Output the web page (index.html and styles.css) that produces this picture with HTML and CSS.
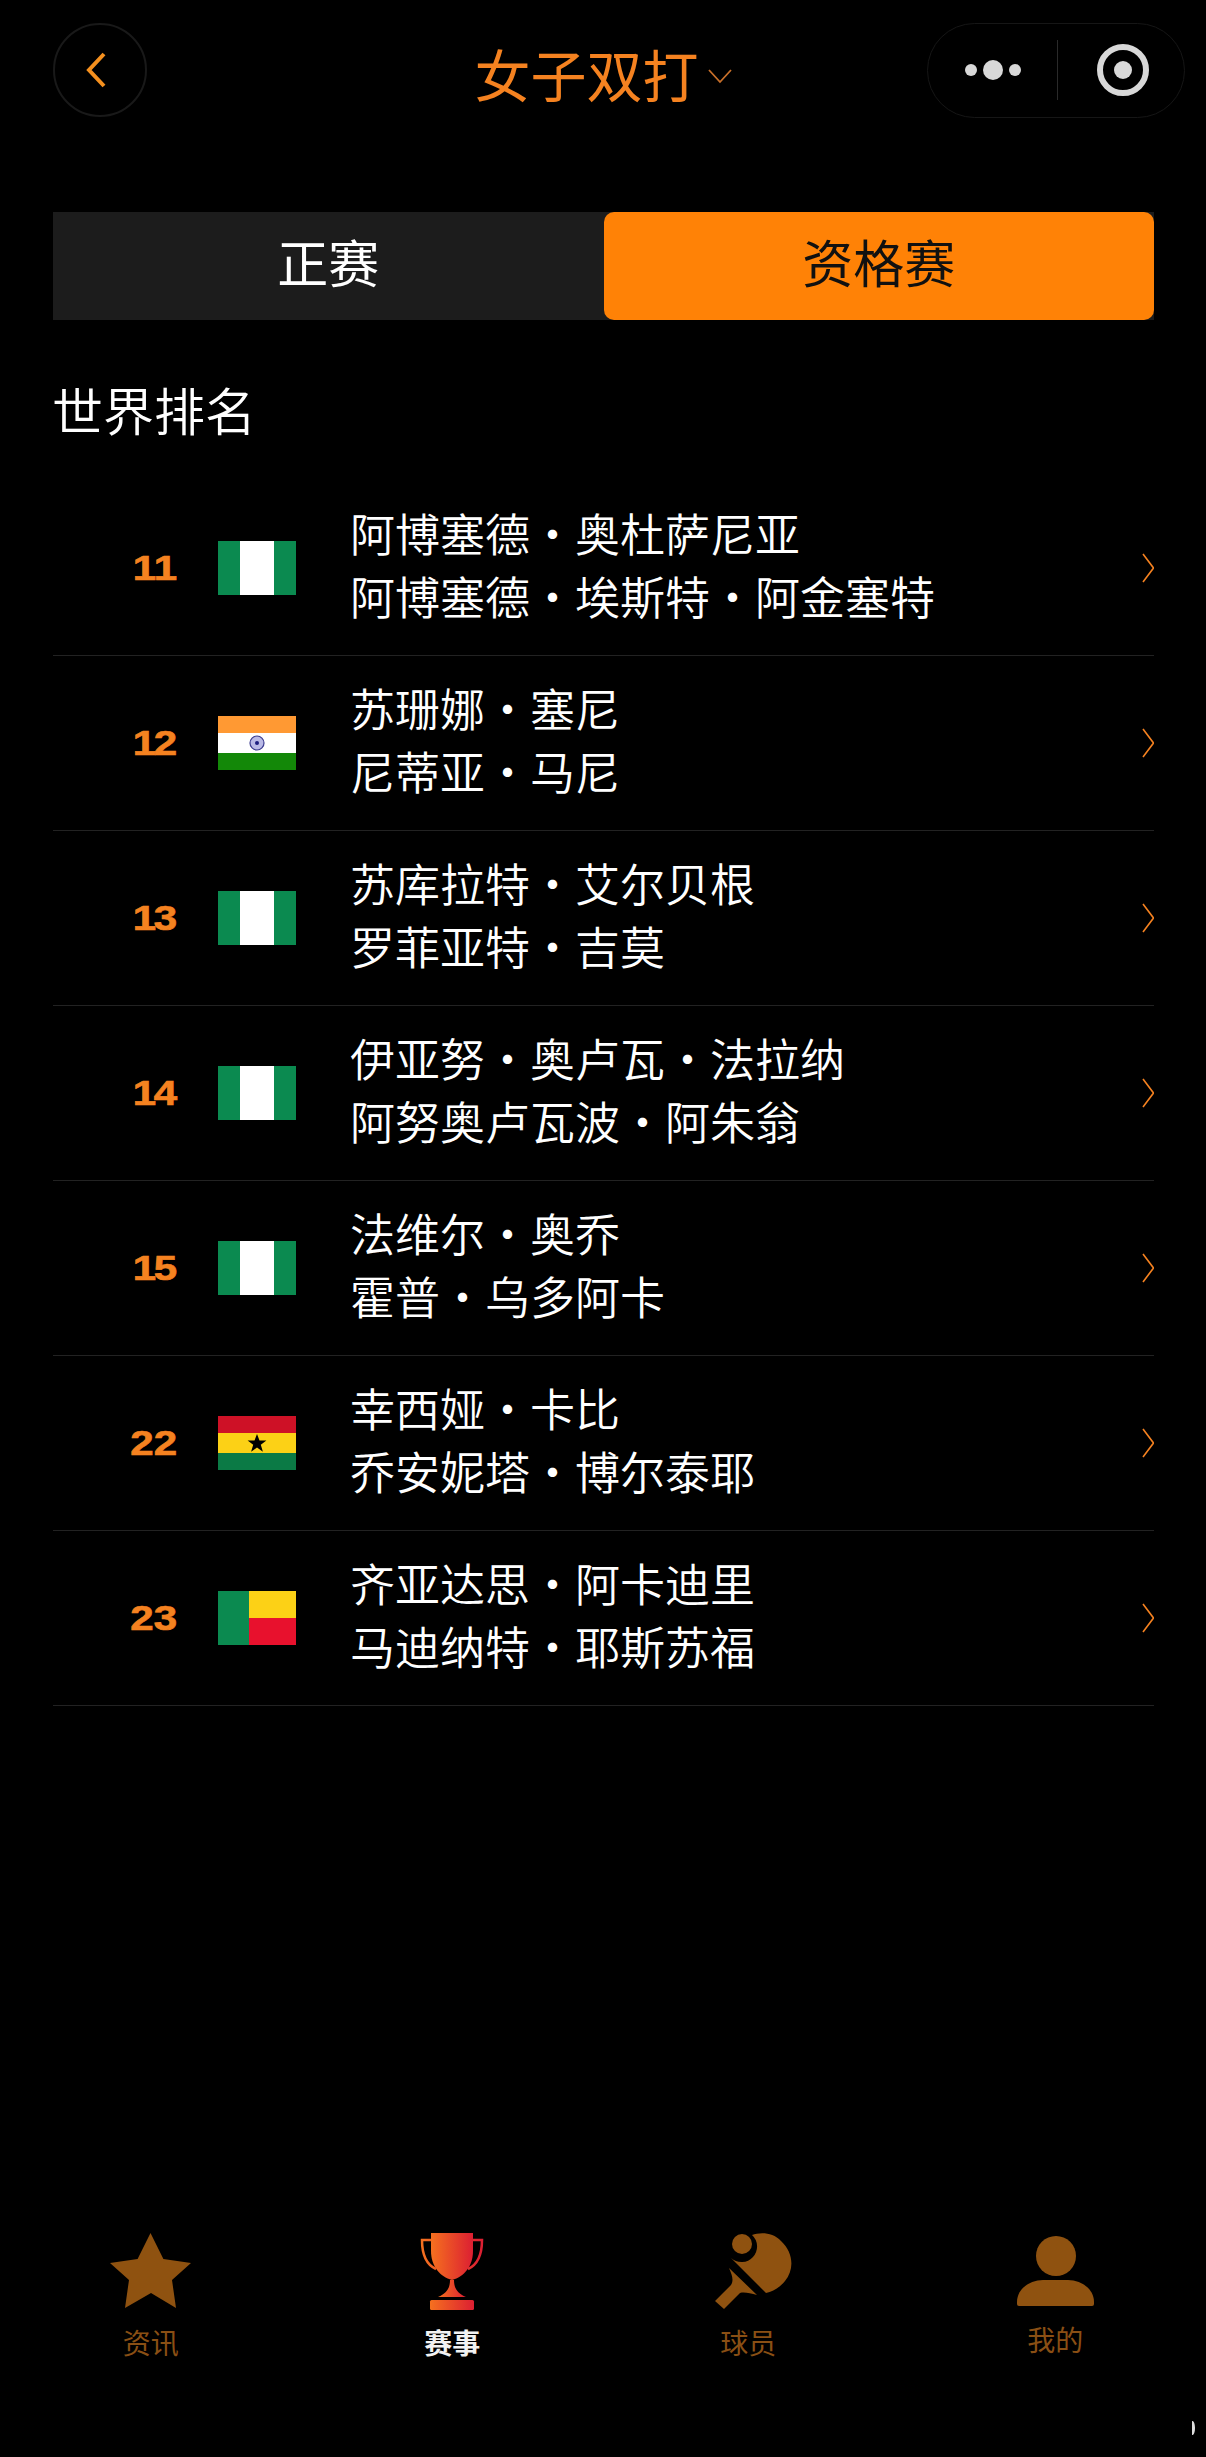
FILE: index.html
```html
<!DOCTYPE html>
<html lang="zh-CN">
<head>
	<meta charset="UTF-8">
	<title>女子双打</title>
	<link rel="stylesheet" href="styles.css">
</head>
<body>
	<svg class="defs" width="0" height="0">
		<symbol id="arrow" viewBox="0 0 14 30"><path d="M3 1l10.500 14L3 29" fill="none" stroke="#f58220" stroke-width="1.600"/></symbol>
		<symbol id="ng" viewBox="0 0 78 54"><rect width="78" height="54" fill="#fff"/><rect width="22" height="54" fill="#0b8a50"/><rect x="56" width="22" height="54" fill="#0b8a50"/></symbol>
	</svg>
	<div class="page">
		<header class="top">
			<span class="back"><svg width="22" height="36" viewBox="0 0 22 36"><path d="M19 2L4 18l15 16" fill="none" stroke="#f5901e" stroke-width="4"/></svg></span>
			<h1 class="title">女子双打<svg width="24" height="15" viewBox="0 0 24 15"><path d="M1 1l11 12L23 1" fill="none" stroke="#c9702a" stroke-width="1.8"/></svg></h1>
			<div class="capsule">
				<svg width="72" height="24" viewBox="0 0 72 24"><circle cx="12" cy="12" r="6" fill="#d8d8d8"/><circle cx="34" cy="12" r="10" fill="#d8d8d8"/><circle cx="56" cy="12" r="6" fill="#d8d8d8"/></svg>
				<i class="capsule-line"></i>
				<svg width="52" height="52" viewBox="0 0 52 52"><circle cx="26" cy="26" r="23" fill="none" stroke="#d8d8d8" stroke-width="6"/><circle cx="26" cy="26" r="9" fill="#d8d8d8"/></svg>
			</div>
		</header>

		<div class="tabs">
			<div class="tab">正赛</div>
			<div class="tab on">资格赛</div>
		</div>

		<h2 class="sub">世界排名</h2>

		<ul class="list">
			<li class="row">
				<span class="rank"><b>1</b>1</span>
				<svg class="flag"><use href="#ng"/></svg>
				<div class="names"><p>阿博塞德·奥杜萨尼亚</p><p>阿博塞德·埃斯特·阿金塞特</p></div>
				<svg class="more"><use href="#arrow"/></svg>
			</li>
			<li class="row">
				<span class="rank"><b>1</b>2</span>
				<svg class="flag" viewBox="0 0 78 54"><rect width="78" height="54" fill="#fff"/><rect width="78" height="17" fill="#ff9933"/><rect y="37" width="78" height="17" fill="#138808"/><circle cx="39" cy="27" r="7" fill="#b9b9e6" stroke="#3b3b8f" stroke-width="1.2"/><circle cx="39" cy="27" r="2" fill="#1e1e80"/></svg>
				<div class="names"><p>苏珊娜·塞尼</p><p>尼蒂亚·马尼</p></div>
				<svg class="more"><use href="#arrow"/></svg>
			</li>
			<li class="row">
				<span class="rank"><b>1</b>3</span>
				<svg class="flag"><use href="#ng"/></svg>
				<div class="names"><p>苏库拉特·艾尔贝根</p><p>罗菲亚特·吉莫</p></div>
				<svg class="more"><use href="#arrow"/></svg>
			</li>
			<li class="row">
				<span class="rank"><b>1</b>4</span>
				<svg class="flag"><use href="#ng"/></svg>
				<div class="names"><p>伊亚努·奥卢瓦·法拉纳</p><p>阿努奥卢瓦波·阿朱翁</p></div>
				<svg class="more"><use href="#arrow"/></svg>
			</li>
			<li class="row">
				<span class="rank"><b>1</b>5</span>
				<svg class="flag"><use href="#ng"/></svg>
				<div class="names"><p>法维尔·奥乔</p><p>霍普·乌多阿卡</p></div>
				<svg class="more"><use href="#arrow"/></svg>
			</li>
			<li class="row">
				<span class="rank">22</span>
				<svg class="flag" viewBox="0 0 78 54"><rect width="78" height="17" fill="#ce1126"/><rect y="17" width="78" height="20" fill="#fcd116"/><rect y="37" width="78" height="17" fill="#0b7a45"/><path d="M39 18l2.500 6.600h6.900l-5.600 4.200 2.100 6.900-5.900-4.200-5.900 4.200 2.100-6.900-5.600-4.200h6.900z" fill="#000"/></svg>
				<div class="names"><p>幸西娅·卡比</p><p>乔安妮塔·博尔泰耶</p></div>
				<svg class="more"><use href="#arrow"/></svg>
			</li>
			<li class="row">
				<span class="rank">23</span>
				<svg class="flag" viewBox="0 0 78 54"><rect width="78" height="54" fill="#0b8a50"/><rect x="31" width="47" height="27" fill="#fcd116"/><rect x="31" y="27" width="47" height="27" fill="#e8112d"/></svg>
				<div class="names"><p>齐亚达思·阿卡迪里</p><p>马迪纳特·耶斯苏福</p></div>
				<svg class="more"><use href="#arrow"/></svg>
			</li>
		</ul>

		<nav class="bar">
			<a class="bar-item">
				<svg width="81" height="78" viewBox="0 0 81 78"><path d="M40.500 0L53.400 26 81 30 62 47 66 75 41 60 15 75 19 47 0 30 27.600 26z" fill="#8f5210"/></svg>
				<span>资讯</span>
			</a>
			<a class="bar-item cur">
				<svg width="64" height="78" viewBox="0 0 64 78">
					<defs><linearGradient id="cup"><stop offset="0" stop-color="#f5701f"/><stop offset="1" stop-color="#dc1f32"/></linearGradient></defs>
					<path d="M11 0H53V18C53 33 44 44 32 47 20 44 11 33 11 18z" fill="url(#cup)"/>
					<path d="M30 47h4c0 8 3 13 12 17H18c9-4 12-9 12-17z" fill="url(#cup)"/>
					<rect x="10" y="67" width="44" height="10" rx="1.500" fill="url(#cup)"/>
					<path d="M11 7H2c0 16 5 25 14 29M53 7h9c0 16-5 25-14 29" fill="none" stroke="url(#cup)" stroke-width="2.500"/>
				</svg>
				<span>赛事</span>
			</a>
			<a class="bar-item">
				<svg width="78" height="78" viewBox="0 0 78 78">
					<circle cx="27" cy="11" r="10" fill="#8f5210"/>
					<path d="M37 2C45-1 58-1 66 8 78 19 80 36 70 48 65 54 58 59 51 60L16 25A14 14 0 0 0 37 2z" fill="#8f5210"/>
					<path d="M14 35L42 62C35 60 29 59 25 60L9 76 0 68 16 52C19 47 17 42 14 35z" fill="#8f5210"/>
				</svg>
				<span class="shift">球员</span>
			</a>
			<a class="bar-item up">
				<svg width="77" height="78" viewBox="0 0 77 78">
					<circle cx="39" cy="23" r="20" fill="#8f5210"/>
					<path d="M0 69C0 55 14 47 26 47H51C63 47 77 55 77 69V71Q77 73 75 73H2Q0 73 0 71z" fill="#8f5210"/>
				</svg>
				<span>我的</span>
			</a>
		</nav>
		<i class="speck"></i>
	</div>
</body>
</html>
```

FILE: styles.css
```css
*{box-sizing:border-box;}
body,h1,h2,ul,li,p{margin:0;padding:0;}
body{background-color:#000;color:#fff;font-family:"Noto Sans CJK SC","Liberation Sans",sans-serif;font-weight:350;}
li{list-style-type:none;}
svg{display:block;}
.defs{position:absolute;}

.page{position:relative;width:1206px;height:2457px;display:flex;flex-direction:column;overflow:hidden;}

.top{display:grid;grid-template-columns:1fr auto 1fr;align-items:center;margin-top:22px;padding:0 21px;height:96px;}
.back{margin-left:32px;width:94px;height:94px;border:2px solid #191919;border-radius:50%;display:flex;align-items:center;justify-content:center;padding-right:8px;}
.title{display:flex;align-items:center;font-size:56px;line-height:70px;font-weight:400;color:#f58220;margin-top:5px;}
.title svg{margin:8px 0 0 9px;}
.capsule{justify-self:end;width:258px;height:95px;border:1px solid #161616;border-radius:48px;display:flex;align-items:center;padding-left:31px;}
.capsule-line{width:1px;height:60px;background-color:#2a2a2a;margin:0 39px 0 26px;}

.tabs{display:flex;margin:94px 52px 0 53px;height:108px;background-color:#1c1c1c;}
.tab{flex:1;display:flex;align-items:center;justify-content:center;font-size:51px;font-weight:400;padding-bottom:10px;}
.tab.on{background-color:#ff8206;color:#111;border-radius:10px;}

.sub{margin:54px 0 3px 52px;font-size:51px;line-height:70px;font-weight:350;}

.list{margin:34px 52px 0 53px;}
.row{display:flex;align-items:center;height:175px;border-bottom:1px solid #222;}
.rank{width:124px;text-align:right;font:bold 35px "Liberation Sans",sans-serif;color:#f58220;-webkit-text-stroke:.7px #f58220;transform:scaleX(1.2);transform-origin:right center;}
.rank b{letter-spacing:-2px;}
.flag{width:78px;height:54px;margin-left:41px;flex:none;}
.names{flex:1;margin:-8px 0 0 54px;font-size:45px;line-height:63px;}
.more{width:14px;height:30px;flex:none;}

.bar{display:grid;grid-template-columns:repeat(4,1fr);margin-top:auto;padding-bottom:100px;}
.bar-item{display:flex;flex-direction:column;align-items:center;font-size:28px;line-height:30px;color:#8a4f14;font-weight:400;}
.bar-item span{margin-top:16px;}
.bar-item.cur{color:#f2f2f2;font-weight:bold;}
.bar-item .shift{margin-right:11px;}
.bar-item.up span{margin-top:13px;}

.speck{position:absolute;left:1190px;top:2421px;width:5px;height:14px;border-right:3px solid #ddd;border-radius:0 50% 50% 0;}
```
